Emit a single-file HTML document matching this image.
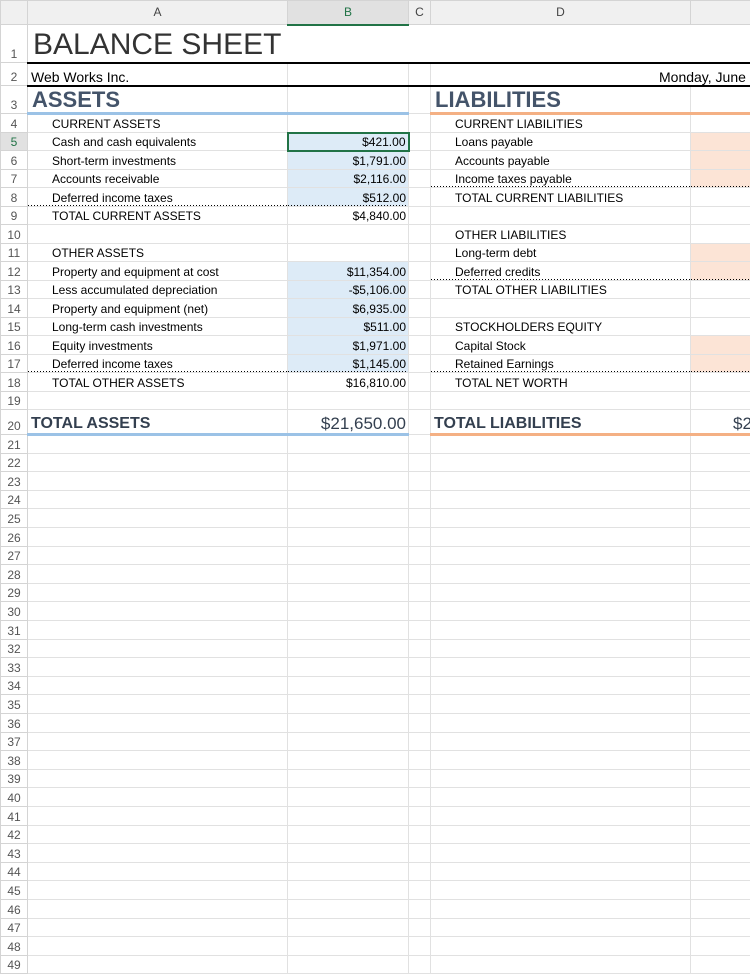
<!DOCTYPE html>
<html><head><meta charset="utf-8"><style>
*{margin:0;padding:0;box-sizing:border-box}
body{width:750px;height:975px;overflow:hidden;background:#fff;font-family:"Liberation Sans",Arial,sans-serif;font-size:12px;color:#000}
table{border-collapse:collapse;table-layout:fixed;width:750px}
td{border:1px solid #e1e1e1;white-space:nowrap;overflow:hidden;padding:0 2px;height:18px;vertical-align:bottom;line-height:15px}
td.n{color:#555;text-align:center;font-size:12px;border-color:#d4d4d4;padding:0}
tr.h td{background:#f0f0f0;color:#444;text-align:center;border-color:#d4d4d4;height:24px;vertical-align:middle}
tr.h td.sel{background:#e1e1e1;color:#217346;border-bottom:2px solid #217346}
.i{padding-left:24px}
.r{text-align:right}
.bl{background-color:#ddebf7}
.or{background-color:#fce4d6}
.dt{background-image:repeating-linear-gradient(90deg,#000 0 1px,transparent 1px 3px);background-size:100% 1px;background-position:left bottom;background-repeat:no-repeat}
</style></head><body>
<table>
<colgroup><col style="width:27px"><col style="width:260px"><col style="width:121px"><col style="width:22px"><col style="width:260px"><col style="width:60px"></colgroup>
<tr class="h"><td></td><td>A</td><td class="sel">B</td><td>C</td><td>D</td><td></td></tr>
<tr style="height:38px"><td class="n" style="vertical-align:bottom">1</td><td colspan="5" style="border-color:#fff;border-left:1px solid #d4d4d4;font-size:30px;line-height:34px;padding-left:5px;color:#333;border-bottom:2px solid #000">BALANCE SHEET</td></tr>
<tr style="height:23px"><td class="n">2</td><td style="font-size:14px;border-bottom:2px solid #000;padding-left:3px">Web Works Inc.</td><td style="border-bottom:2px solid #000"></td><td style="border-bottom:2px solid #000"></td><td colspan="2" style="font-size:14px;border-bottom:2px solid #000;padding-left:228px">Monday, June 1, 2020</td></tr>
<tr style="height:28px"><td class="n">3</td><td style="font-size:22px;color:#44546a;border-bottom:3px solid #9bc2e6;line-height:24px;padding-left:4px;font-weight:bold">ASSETS</td><td style="border-bottom:3px solid #9bc2e6"></td><td></td><td style="font-size:22px;color:#44546a;border-bottom:3px solid #f4b084;line-height:24px;padding-left:4px;font-weight:bold">LIABILITIES</td><td style="border-bottom:3px solid #f4b084"></td></tr>
<tr style="height:19px"><td class="n">4</td><td class="i">CURRENT ASSETS</td><td></td><td></td><td class="i">CURRENT LIABILITIES</td><td></td></tr>
<tr style="height:18px"><td class="n" style="color:#217346;background:#e1e1e1">5</td><td class="i">Cash and cash equivalents</td><td class="r bl" style="border:2px solid #217346">$421.00</td><td></td><td class="i">Loans payable</td><td class="or"></td></tr>
<tr style="height:19px"><td class="n">6</td><td class="i">Short-term investments</td><td class="r bl">$1,791.00</td><td></td><td class="i">Accounts payable</td><td class="or"></td></tr>
<tr style="height:18px"><td class="n">7</td><td class="i">Accounts receivable</td><td class="r bl">$2,116.00</td><td></td><td class="i dt">Income taxes payable</td><td class="or dt"></td></tr>
<tr style="height:19px"><td class="n">8</td><td class="i dt">Deferred income taxes</td><td class="r bl dt">$512.00</td><td></td><td class="i">TOTAL CURRENT LIABILITIES</td><td></td></tr>
<tr style="height:18px"><td class="n">9</td><td class="i">TOTAL CURRENT ASSETS</td><td class="r">$4,840.00</td><td></td><td></td><td></td></tr>
<tr style="height:19px"><td class="n">10</td><td></td><td></td><td></td><td class="i">OTHER LIABILITIES</td><td></td></tr>
<tr style="height:18px"><td class="n">11</td><td class="i">OTHER ASSETS</td><td></td><td></td><td class="i">Long-term debt</td><td class="or"></td></tr>
<tr style="height:19px"><td class="n">12</td><td class="i">Property and equipment at cost</td><td class="r bl">$11,354.00</td><td></td><td class="i dt">Deferred credits</td><td class="or dt"></td></tr>
<tr style="height:18px"><td class="n">13</td><td class="i">Less accumulated depreciation</td><td class="r bl">-$5,106.00</td><td></td><td class="i">TOTAL OTHER LIABILITIES</td><td></td></tr>
<tr style="height:19px"><td class="n">14</td><td class="i">Property and equipment (net)</td><td class="r bl">$6,935.00</td><td></td><td></td><td></td></tr>
<tr style="height:18px"><td class="n">15</td><td class="i">Long-term cash investments</td><td class="r bl">$511.00</td><td></td><td class="i">STOCKHOLDERS EQUITY</td><td></td></tr>
<tr style="height:19px"><td class="n">16</td><td class="i">Equity investments</td><td class="r bl">$1,971.00</td><td></td><td class="i">Capital Stock</td><td class="or"></td></tr>
<tr style="height:18px"><td class="n">17</td><td class="i dt">Deferred income taxes</td><td class="r bl dt">$1,145.00</td><td></td><td class="i dt">Retained Earnings</td><td class="or dt"></td></tr>
<tr style="height:19px"><td class="n">18</td><td class="i">TOTAL OTHER ASSETS</td><td class="r">$16,810.00</td><td></td><td class="i">TOTAL NET WORTH</td><td></td></tr>
<tr style="height:18px"><td class="n">19</td><td></td><td></td><td></td><td></td><td></td></tr>
<tr style="height:25px"><td class="n">20</td><td style="font-size:16px;font-weight:bold;color:#333f4f;border-bottom:3px solid #9bc2e6;padding-left:3px;line-height:18px">TOTAL ASSETS</td><td class="r" style="font-size:17px;color:#333f4f;border-bottom:3px solid #9bc2e6;line-height:18px">$21,650.00</td><td></td><td style="font-size:16px;font-weight:bold;color:#333f4f;border-bottom:3px solid #f4b084;padding-left:3px;line-height:18px">TOTAL LIABILITIES</td><td style="font-size:17px;color:#333f4f;border-bottom:3px solid #f4b084;line-height:18px;padding-left:42px">$21,650.00</td></tr>
<tr style="height:19px"><td class="n">21</td><td></td><td></td><td></td><td></td><td></td></tr>
<tr style="height:18px"><td class="n">22</td><td></td><td></td><td></td><td></td><td></td></tr>
<tr style="height:19px"><td class="n">23</td><td></td><td></td><td></td><td></td><td></td></tr>
<tr style="height:18px"><td class="n">24</td><td></td><td></td><td></td><td></td><td></td></tr>
<tr style="height:19px"><td class="n">25</td><td></td><td></td><td></td><td></td><td></td></tr>
<tr style="height:19px"><td class="n">26</td><td></td><td></td><td></td><td></td><td></td></tr>
<tr style="height:18px"><td class="n">27</td><td></td><td></td><td></td><td></td><td></td></tr>
<tr style="height:19px"><td class="n">28</td><td></td><td></td><td></td><td></td><td></td></tr>
<tr style="height:18px"><td class="n">29</td><td></td><td></td><td></td><td></td><td></td></tr>
<tr style="height:19px"><td class="n">30</td><td></td><td></td><td></td><td></td><td></td></tr>
<tr style="height:19px"><td class="n">31</td><td></td><td></td><td></td><td></td><td></td></tr>
<tr style="height:18px"><td class="n">32</td><td></td><td></td><td></td><td></td><td></td></tr>
<tr style="height:19px"><td class="n">33</td><td></td><td></td><td></td><td></td><td></td></tr>
<tr style="height:18px"><td class="n">34</td><td></td><td></td><td></td><td></td><td></td></tr>
<tr style="height:19px"><td class="n">35</td><td></td><td></td><td></td><td></td><td></td></tr>
<tr style="height:19px"><td class="n">36</td><td></td><td></td><td></td><td></td><td></td></tr>
<tr style="height:18px"><td class="n">37</td><td></td><td></td><td></td><td></td><td></td></tr>
<tr style="height:19px"><td class="n">38</td><td></td><td></td><td></td><td></td><td></td></tr>
<tr style="height:18px"><td class="n">39</td><td></td><td></td><td></td><td></td><td></td></tr>
<tr style="height:19px"><td class="n">40</td><td></td><td></td><td></td><td></td><td></td></tr>
<tr style="height:19px"><td class="n">41</td><td></td><td></td><td></td><td></td><td></td></tr>
<tr style="height:18px"><td class="n">42</td><td></td><td></td><td></td><td></td><td></td></tr>
<tr style="height:19px"><td class="n">43</td><td></td><td></td><td></td><td></td><td></td></tr>
<tr style="height:18px"><td class="n">44</td><td></td><td></td><td></td><td></td><td></td></tr>
<tr style="height:19px"><td class="n">45</td><td></td><td></td><td></td><td></td><td></td></tr>
<tr style="height:19px"><td class="n">46</td><td></td><td></td><td></td><td></td><td></td></tr>
<tr style="height:18px"><td class="n">47</td><td></td><td></td><td></td><td></td><td></td></tr>
<tr style="height:19px"><td class="n">48</td><td></td><td></td><td></td><td></td><td></td></tr>
<tr style="height:18px"><td class="n">49</td><td></td><td></td><td></td><td></td><td></td></tr>
</table>
</body></html>
